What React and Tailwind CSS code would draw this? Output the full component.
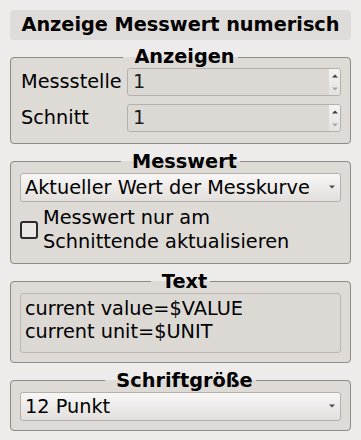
import React from "react";

const Combo = ({ value }) => {
  return (
    <div className="flex h-[29px] items-center justify-between rounded-[3px] border border-[#b4b1ad] bg-gradient-to-b from-[#f8f7f6] to-[#e2dfdc] pl-[4px] pr-[5px]">
      <span className="leading-[27px]">{value}</span>
      <svg width="6" height="4" viewBox="0 0 6 4">
        <path d="M0 0.5h6L3 3.5z" fill="#4a4a4a" />
      </svg>
    </div>
  );
};

const SpinBox = ({ value }) => {
  return (
    <div className="flex h-[28px] flex-1 rounded-[3px] border border-[#b4b1ad] bg-[#dcd9d5]">
      <span className="flex-1 pl-[5px] leading-[26px] text-[#1b1b1b]">{value}</span>
      <div className="flex w-[11px] flex-col items-center justify-around rounded-r-[2px] bg-gradient-to-b from-[#f4f3f2] to-[#e4e2df]">
        <svg width="6" height="4" viewBox="0 0 6 4">
          <path d="M0 3.5h6L3 0.5z" fill="#3c3c3c" />
        </svg>
        <svg width="6" height="4" viewBox="0 0 6 4">
          <path d="M0 0.5h6L3 3.5z" fill="#a9a6a2" />
        </svg>
      </div>
    </div>
  );
};

const Group = ({ title, className = "", children }) => {
  return (
    <fieldset
      className={`rounded-[4px] border border-[#8e8b87] bg-[#dedbd7] px-[9px] pb-[9px] ${className}`}
    >
      {/* Qt draws the title a few px right of centre */}
      <legend className="relative left-[4px] mx-auto px-[7px] text-[19.3px] font-bold leading-[22px]">
        {title}
      </legend>
      {children}
    </fieldset>
  );
};

const App = () => {
  return (
    <div className="h-[440px] w-[361px] bg-[#edeceb] px-[10px] pt-[10px] font-['DejaVu_Sans',Verdana,sans-serif] text-[19.3px] text-black">
      <div className="flex h-[30px] items-center justify-center rounded-[4px] bg-[#dedbd8] font-bold">
        Anzeige Messwert numerisch
      </div>

      <Group title="Anzeigen" className="mt-[6px]">
        <div className="flex flex-col gap-[7px] pb-px">
          <div className="flex items-center gap-[6px]">
            <span className="w-[101px] pl-px">Messstelle</span>
            <SpinBox value="1" />
          </div>
          <div className="flex items-center gap-[6px]">
            <span className="w-[101px] pl-px">Schnitt</span>
            <SpinBox value="1" />
          </div>
        </div>
      </Group>

      <Group title="Messwert" className="mt-[7px]">
        <Combo value="Aktueller Wert der Messkurve" />
        <div className="mt-[4px] flex items-center gap-[5px]">
          <div className="h-[18px] w-[18px] shrink-0 rounded-[3px] border-2 border-[#2b2b2b] bg-[#e9e7e4]" />
          <span className="leading-[24px]">
            Messwert nur am
            <br />
            Schnittende aktualisieren
          </span>
        </div>
      </Group>

      <Group title="Text" className="mt-[7px]">
        <div className="h-[60px] rounded-[3px] border border-[#bab7b3] bg-[#dcd9d5] px-[4px] pt-[3px] leading-[23px]">
          current value=$VALUE
          <br />
          current unit=$UNIT
        </div>
      </Group>

      <Group title="Schriftgröße" className="mt-[7px]">
        <Combo value="12 Punkt" />
      </Group>
    </div>
  );
};

export default App;
